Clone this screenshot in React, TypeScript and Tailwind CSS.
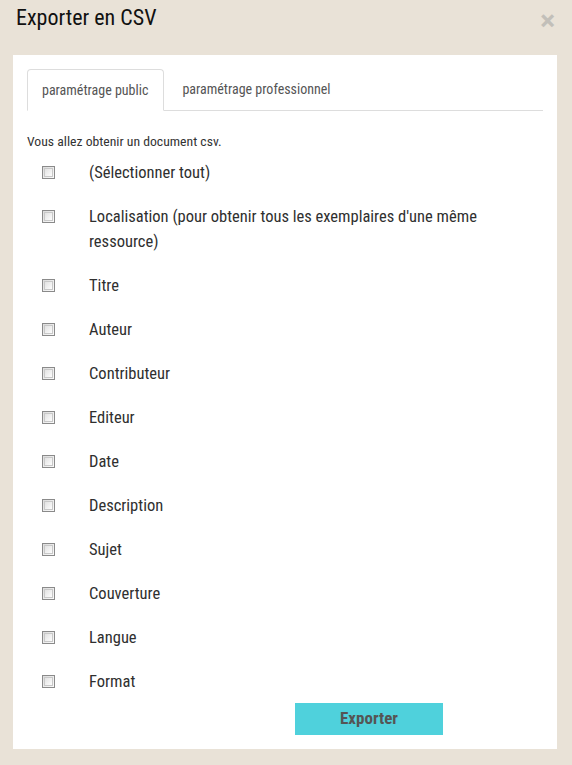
import React from "react";

const fields = [
  "(Sélectionner tout)",
  "Localisation (pour obtenir tous les exemplaires d'une même ressource)",
  "Titre",
  "Auteur",
  "Contributeur",
  "Editeur",
  "Date",
  "Description",
  "Sujet",
  "Couverture",
  "Langue",
  "Format",
];

const Box = () => (
  <span className="mt-[6px] h-[13px] w-[13px] shrink-0 border border-[#8a8a8a] bg-gradient-to-br from-[#dcdcdc] to-[#fbfbfb] p-[1px]">
    <span className="block h-full w-full border border-[#c8c8c8] bg-gradient-to-br from-[#e2e2e2] to-[#fdfdfd]" />
  </span>
);

export default function App() {
  return (
    <div className="flex h-[765px] w-[572px] flex-col bg-[#e9e2d7] font-['Roboto_Condensed',Roboto,sans-serif] text-[#333]">
      <div className="flex h-[55px] items-start justify-between pl-[16px] pr-[17px] pt-[4px]">
        <h1 className="text-[22px] leading-[28px] text-[#111]">Exporter en CSV</h1>
        <span className="mt-[3px] font-['Roboto',sans-serif] text-[28px] font-bold leading-[28px] text-[#c2bfb9]">×</span>
      </div>

      <div className="mb-[16px] ml-[13px] mr-[15px] flex flex-1 flex-col bg-white pl-[14px] pr-[14px] pt-[14px]">
        <div className="flex border-b border-[#ddd]">
          <div className="-mb-px flex h-[42px] items-center rounded-t-[4px] border border-[#ddd] border-b-white bg-white pl-[14px] pr-[15px] text-[14px] text-[#555]">
            paramétrage public
          </div>
          <div className="ml-[2px] flex h-[41px] items-center border border-transparent px-[15px] text-[14px] text-[#555]">
            paramétrage professionnel
          </div>
        </div>

        <p className="mt-[22px] text-[13.7px] leading-[16px] text-[#333]">
          Vous allez obtenir un document csv.
        </p>

        <ul className="mt-[11px] flex flex-col">
          {fields.map((f) => (
            <li key={f} className="flex items-start pb-[19px] pl-[15px]">
              <Box />
              <span className="ml-[34px] max-w-[440px] text-[16.5px] leading-[25px] text-[#2f2f2f]">{f}</span>
            </li>
          ))}
        </ul>

        <div className="-mt-[10px] pl-[268px]">
          <button className="h-[32px] w-[148px] bg-[#4fd1dc] text-[17px] font-bold text-[#555]">
            Exporter
          </button>
        </div>
      </div>
    </div>
  );
}
